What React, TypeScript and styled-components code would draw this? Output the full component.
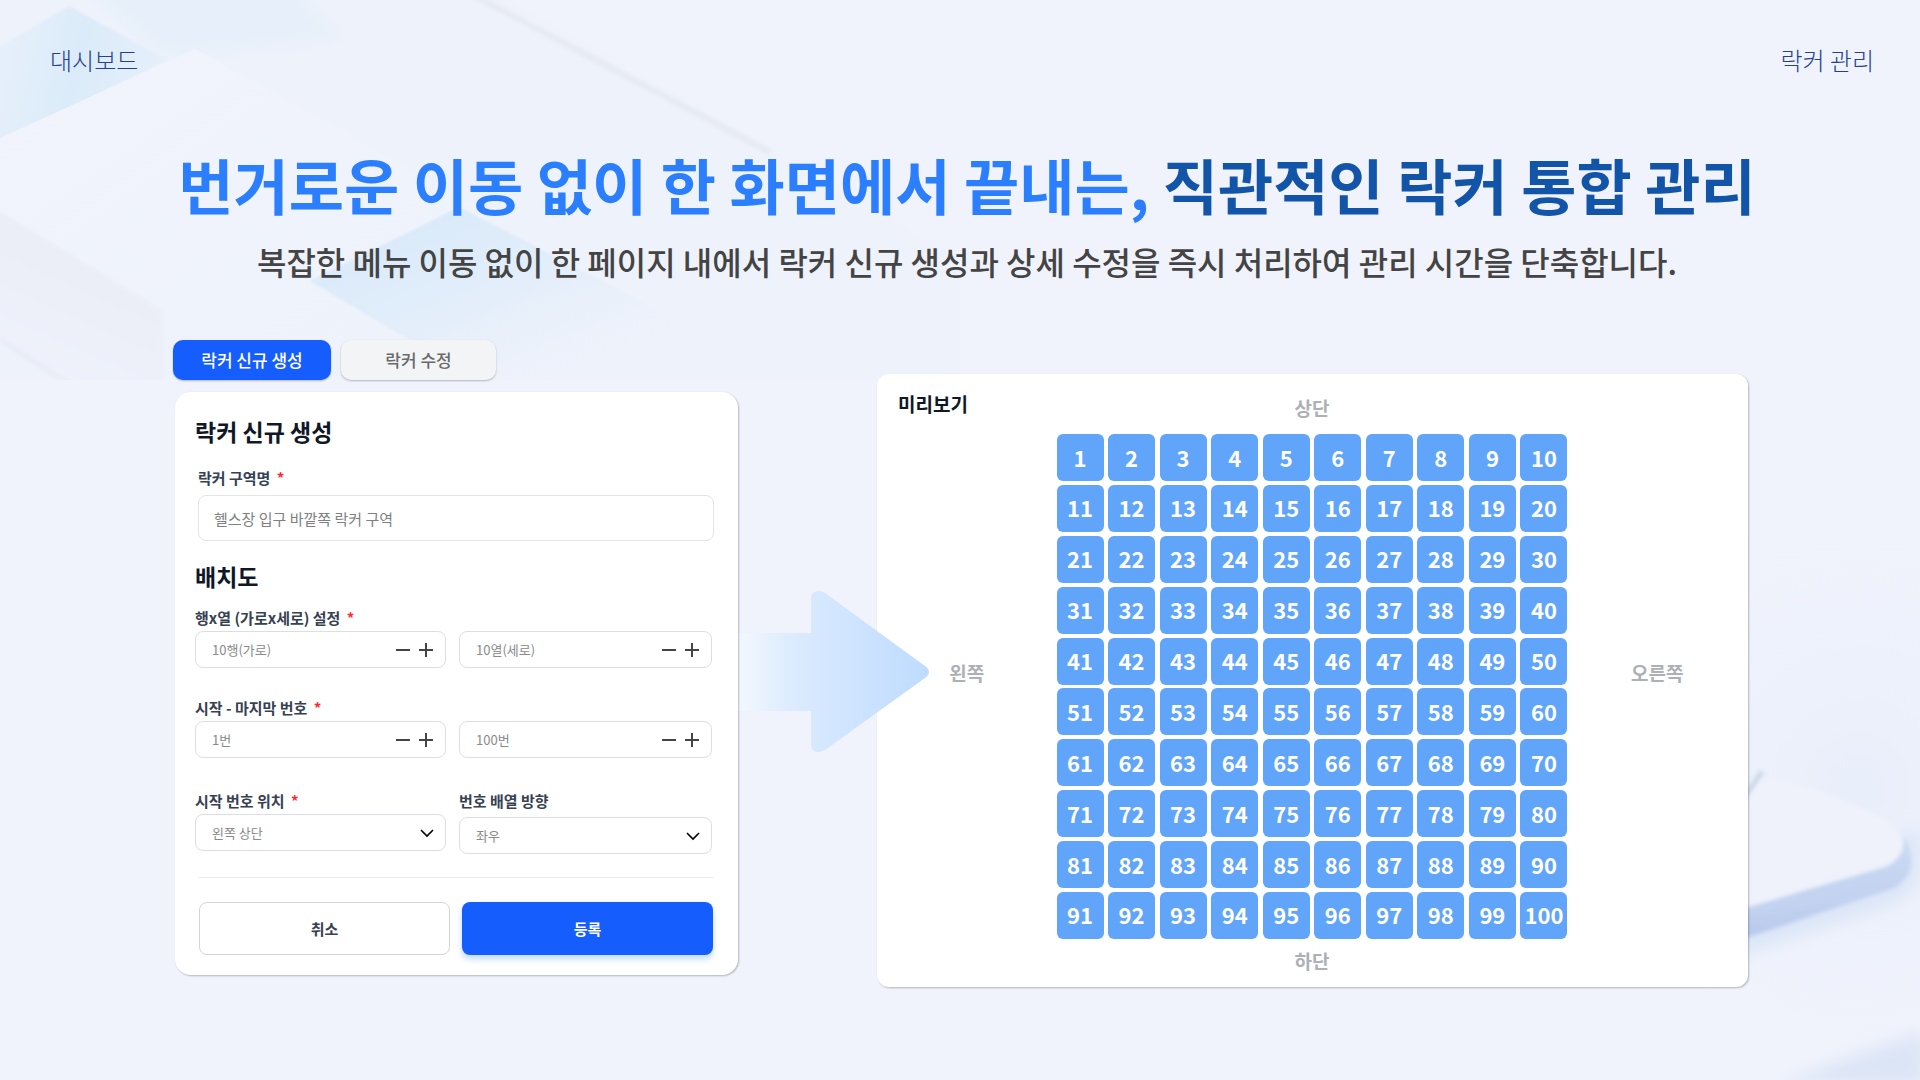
import React from "react";
import styled, { createGlobalStyle, css } from "styled-components";

const GlobalStyle = createGlobalStyle`
  * { box-sizing: border-box; }
  body {
    margin: 0;
    background: #eff3fc;
    font-family: "Noto Sans CJK KR", "Noto Sans", sans-serif;
  }
  button, input, select { font-family: inherit; }
`;

const Page = styled.div`
  position: relative;
  isolation: isolate;
  min-height: 100vh;
  overflow: hidden;
  background: #f0f3fc;
`;

const Backdrop = styled.svg`
  position: absolute;
  inset: 0;
  z-index: -1;
  width: 100%;
  height: 100%;
`;

const TopBar = styled.header`
  display: flex;
  justify-content: space-between;
  padding: 40px 46px 0 50px;
`;

const TopLink = styled.a`
  color: #24418f;
  font-size: 24px;
  font-weight: 300;
  line-height: 40px;
  text-decoration: none;
`;

const Hero = styled.div`
  padding: 60px 24px 0 38px;
  text-align: center;
`;

const Title = styled.h1`
  margin: 0;
  color: #2b7fff;
  font-size: 60px;
  font-weight: 700;
  line-height: 88px;
`;

const TitleStrong = styled.span`
  color: #1254a8;
`;

const Subtitle = styled.p`
  margin: 9px 0 0;
  color: #444444;
  font-size: 32px;
  font-weight: 500;
  line-height: 48px;
`;

const Stage = styled.main`
  display: grid;
  grid-template-columns: 565fr 139fr 871fr;
  align-items: start;
  margin: 55px 172px 0 173px;
`;

const FormColumn = styled.section`
  position: relative;
  z-index: 2;
  display: flex;
  flex-direction: column;
  gap: 12px;
`;

const Tabs = styled.div`
  display: flex;
  gap: 10px;
`;

const Tab = styled.button<{ $active?: boolean }>`
  width: ${(p) => (p.$active ? 158 : 155)}px;
  height: 40px;
  padding: 0;
  border: 0;
  border-radius: 10px;
  background: ${(p) => (p.$active ? "#155dfc" : "#f3f4f6")};
  color: ${(p) => (p.$active ? "#ffffff" : "#6a6a6a")};
  font-size: 17px;
  font-weight: 500;
  line-height: 24px;
  box-shadow: 0 1px 2px rgba(0, 0, 0, 0.25);
`;

const cardStyle = css`
  background: #ffffff;
  box-shadow: 1px 1px 2px rgba(0, 0, 0, 0.25);
`;

const FormCard = styled.form`
  ${cardStyle}
  display: flex;
  flex-direction: column;
  margin-left: 2px;
  padding: 22px 24px 20px 20px;
  border-radius: 16px;
`;

const SectionTitle = styled.h2`
  margin: 0;
  color: #101828;
  font-size: 23px;
  font-weight: 700;
  line-height: 34px;
`;

const Field = styled.div`
  display: flex;
  flex-direction: column;
  gap: 1px;
  min-width: 0;
`;

const NameField = styled(Field)`
  margin: 18px 0;
  padding-left: 3px;
  gap: 5px;
`;

const Label = styled.label`
  color: #364153;
  font-size: 15px;
  font-weight: 700;
  line-height: 24px;
`;

const Required = styled.span`
  margin-left: 3px;
  color: #fb2c36;
`;

const Box = styled.div`
  display: flex;
  align-items: center;
  height: 37px;
  padding: 0 8px 0 16px;
  border: 1px solid #dcdee6;
  border-radius: 8px;
  background: #ffffff;
`;

const NameInput = styled.input`
  width: 100%;
  height: 46px;
  padding: 0 15px;
  border: 1px solid #e2e4ec;
  border-radius: 8px;
  background: #ffffff;
  color: #808080;
  font-size: 15px;
`;

const BoxInput = styled.input`
  flex: 1;
  min-width: 0;
  padding: 0;
  border: 0;
  outline: 0;
  background: transparent;
  color: #8a8a8a;
  font-size: 13px;
`;

const StepButton = styled.button`
  display: flex;
  align-items: center;
  justify-content: center;
  width: 23px;
  height: 24px;
  padding: 0;
  border: 0;
  background: transparent;
`;

const SelectWrap = styled(Box)`
  position: relative;
  padding: 0;
`;

const Select = styled.select`
  width: 100%;
  height: 100%;
  padding: 0 40px 0 16px;
  border: 0;
  border-radius: 8px;
  appearance: none;
  background: transparent;
  color: #8a8a8a;
  font-size: 13px;
`;

const SelectArrow = styled.svg`
  position: absolute;
  right: 11px;
  top: 50%;
  margin-top: -6px;
  pointer-events: none;
`;

const PairRow = styled.div<{ $top?: number }>`
  display: grid;
  grid-template-columns: 251fr 253fr;
  column-gap: 13px;
  align-items: end;
  margin: ${(p) => p.$top ?? 0}px 2px 0 0;
`;

const SelectRow = styled(PairRow)`
  align-items: start;
`;

const LooseField = styled(Field)`
  gap: 4px;
`;

const Actions = styled.div`
  display: grid;
  grid-template-columns: 1fr 1fr;
  gap: 12px;
  margin: 23px 1px 0 4px;
  padding-top: 24px;
  border-top: 1px solid #e8eaee;
`;

const ActionButton = styled.button<{ $primary?: boolean }>`
  height: 53px;
  border: ${(p) => (p.$primary ? "0" : "1px solid #d1d5dc")};
  border-radius: 8px;
  background: ${(p) => (p.$primary ? "#155dfc" : "#ffffff")};
  color: ${(p) => (p.$primary ? "#ffffff" : "#364153")};
  font-size: 15px;
  font-weight: 700;
  box-shadow: ${(p) => (p.$primary ? "0 4px 6px #bedbff" : "none")};
`;

const ArrowColumn = styled.div`
  position: relative;
  z-index: 1;
  align-self: stretch;
`;

const Arrow = styled.svg`
  position: absolute;
  left: 0;
  top: 251px;
`;

const PreviewCard = styled.section`
  ${cardStyle}
  display: grid;
  grid-template-columns: 1fr 511px 1fr;
  margin-top: 34px;
  padding: 16px 1px 12px 0;
  border-radius: 12px;
`;

const PreviewTitle = styled.h2`
  grid-area: 1 / 1;
  margin: 0 0 0 21px;
  color: #101828;
  font-size: 19px;
  font-weight: 700;
  line-height: 28px;
`;

const Side = styled.div<{ $area: string }>`
  grid-area: ${(p) => p.$area};
  place-self: center;
  color: #adb0b6;
  font-size: 19px;
  font-weight: 700;
  line-height: 28px;
`;

const TopSide = styled(Side)`
  margin-top: 4px;
`;

const FlankSide = styled(Side)`
  margin-top: 8px;
`;

const LockerGrid = styled.div`
  grid-area: 2 / 2;
  display: grid;
  grid-template-columns: repeat(10, 47px);
  grid-template-rows: repeat(10, 47px);
  justify-content: space-between;
  align-content: space-between;
  height: 505px;
  margin: 12px 0 8px;
`;

const Locker = styled.button`
  padding: 0 0 2px;
  border: 0;
  border-radius: 6px;
  background: #60a5fa;
  color: #ffffff;
  font-size: 22px;
  font-weight: 700;
  line-height: 1;
`;

const MinusIcon = () => (
  <svg width="14" height="14" viewBox="0 0 14 14" stroke="#444444" strokeWidth="2">
    <path d="M0 7h14" />
  </svg>
);

const PlusIcon = () => (
  <svg width="14" height="14" viewBox="0 0 14 14" stroke="#444444" strokeWidth="2">
    <path d="M0 7h14M7 0v14" />
  </svg>
);

const Star = () => <Required> *</Required>;

function NumberBox({ id, value, label }: { id: string; value: string; label?: string }) {
  return (
    <Box>
      <BoxInput id={id} aria-label={label} defaultValue={value} />
      <StepButton type="button" aria-label="감소"><MinusIcon /></StepButton>
      <StepButton type="button" aria-label="증가"><PlusIcon /></StepButton>
    </Box>
  );
}

function SelectBox({ id, value }: { id: string; value: string }) {
  return (
    <SelectWrap>
      <Select id={id} defaultValue={value}>
        <option>{value}</option>
      </Select>
      <SelectArrow width="14" height="12" viewBox="0 0 14 12" fill="none" stroke="#000000" strokeWidth="1.6">
        <path d="M1 3l6 6 6-6" />
      </SelectArrow>
    </SelectWrap>
  );
}

function BackdropArt() {
  return (
    <Backdrop viewBox="0 0 1920 1080" preserveAspectRatio="xMidYMid slice" aria-hidden="true">
      <defs>
        <linearGradient id="sky" x1="0" y1="0" x2="1" y2="0.2">
          <stop offset="0" stopColor="#e8f1fb" />
          <stop offset="0.55" stopColor="#dcebf9" />
          <stop offset="1" stopColor="#e4effa" />
        </linearGradient>
        <linearGradient id="diamond" x1="0.2" y1="0" x2="0.9" y2="0.7">
          <stop offset="0" stopColor="#d9e9f9" />
          <stop offset="0.5" stopColor="#e3eefa" />
          <stop offset="1" stopColor="#eef2fb" stopOpacity="0" />
        </linearGradient>
        <linearGradient id="slab" x1="0" y1="0" x2="1" y2="1">
          <stop offset="0" stopColor="#f1f4fc" />
          <stop offset="1" stopColor="#eef2fb" />
        </linearGradient>
        <linearGradient id="strip" x1="0.6" y1="0.2" x2="0.3" y2="0.9">
          <stop offset="0" stopColor="#eaedf5" />
          <stop offset="1" stopColor="#eef2fb" />
        </linearGradient>
        <linearGradient id="edge" x1="0" y1="0" x2="0.2" y2="1">
          <stop offset="0" stopColor="#cfdff5" />
          <stop offset="0.7" stopColor="#c2d2f0" />
          <stop offset="1" stopColor="#b4c6ea" />
        </linearGradient>
        <radialGradient id="corner" cx="0.9" cy="0.55" r="0.5">
          <stop offset="0" stopColor="#e8eefa" />
          <stop offset="1" stopColor="#f0f3fc" stopOpacity="0" />
        </radialGradient>
        <filter id="soft1"><feGaussianBlur stdDeviation="1" /></filter>
        <filter id="soft2"><feGaussianBlur stdDeviation="2" /></filter>
        <filter id="soft8"><feGaussianBlur stdDeviation="8" /></filter>
        <clipPath id="topClip"><path d="M0 0h960v380H0z" /></clipPath>
      </defs>
      <g clipPath="url(#topClip)">
        <path d="M-20 -20H470L960 260V400H-20z" fill="#eef2fb" filter="url(#soft8)" />
        <path d="M75 -20H290L345 40L165 60z" fill="#e7f0fa" filter="url(#soft8)" />
        <path d="M-10 52L69 6L167 60L-10 150z" fill="url(#sky)" filter="url(#soft1)" />
        <path d="M0 138L195 49L480 207L300 380H165V310L0 212z" fill="url(#slab)" />
        <path d="M-10 206L161 310L165 390H60L-10 340z" fill="url(#strip)" filter="url(#soft2)" />
        <path d="M459 207L740 352L760 390H494L310 281z" fill="url(#diamond)" filter="url(#soft1)" />
        <path d="M475 -4L770 152" stroke="#e4e8f0" strokeWidth="5" filter="url(#soft2)" />
        <path d="M0 340L70 384" stroke="#e7ebf4" strokeWidth="4" filter="url(#soft2)" />
      </g>
      <path d="M1300 430H1920V1080H1300z" fill="url(#corner)" />
      <path d="M1740 956L1890 905Q1915 895 1920 870V830L1740 900z" fill="#dbe6f7" filter="url(#soft8)" />
      <g filter="url(#soft2)">
        <path d="M1740 806L1762 772" stroke="#cbd7e9" strokeWidth="6" />
        <path d="M1740 908L1888 865Q1904 856 1904 836Q1922 872 1894 888L1740 940z" fill="url(#edge)" />
      </g>
      <path
        d="M1740 808L1764 776Q1830 790 1888 822Q1918 848 1886 866L1740 909z"
        fill="#eff2fb"
        filter="url(#soft2)"
      />
      <path d="M1780 1084Q1850 1056 1924 1032V1084z" fill="#dce5f6" filter="url(#soft8)" />
    </Backdrop>
  );
}

export default function App() {
  return (
    <Page>
      <GlobalStyle />
      <BackdropArt />
      <TopBar>
        <TopLink href="#dashboard">대시보드</TopLink>
        <TopLink href="#lockers">락커 관리</TopLink>
      </TopBar>
      <Hero>
        <Title>
          번거로운 이동 없이 한 화면에서 끝내는, <TitleStrong>직관적인 락커 통합 관리</TitleStrong>
        </Title>
        <Subtitle>
          복잡한 메뉴 이동 없이 한 페이지 내에서 락커 신규 생성과 상세 수정을 즉시 처리하여 관리 시간을 단축합니다.
        </Subtitle>
      </Hero>
      <Stage>
        <FormColumn>
          <Tabs>
            <Tab type="button" $active>락커 신규 생성</Tab>
            <Tab type="button">락커 수정</Tab>
          </Tabs>
          <FormCard onSubmit={(e) => e.preventDefault()}>
            <SectionTitle>락커 신규 생성</SectionTitle>
            <NameField>
              <Label htmlFor="zone">락커 구역명<Star /></Label>
              <NameInput id="zone" defaultValue="헬스장 입구 바깥쪽 락커 구역" />
            </NameField>
            <SectionTitle>배치도</SectionTitle>
            <PairRow $top={13}>
              <Field>
                <Label htmlFor="rows">행x열 (가로x세로) 설정<Star /></Label>
                <NumberBox id="rows" value="10행(가로)" />
              </Field>
              <NumberBox id="cols" label="열" value="10열(세로)" />
            </PairRow>
            <PairRow $top={28}>
              <Field>
                <Label htmlFor="first">시작 - 마지막 번호<Star /></Label>
                <NumberBox id="first" value="1번" />
              </Field>
              <NumberBox id="last" label="마지막 번호" value="100번" />
            </PairRow>
            <SelectRow $top={31}>
              <Field>
                <Label htmlFor="origin">시작 번호 위치<Star /></Label>
                <SelectBox id="origin" value="왼쪽 상단" />
              </Field>
              <LooseField>
                <Label htmlFor="direction">번호 배열 방향</Label>
                <SelectBox id="direction" value="좌우" />
              </LooseField>
            </SelectRow>
            <Actions>
              <ActionButton type="button">취소</ActionButton>
              <ActionButton type="submit" $primary>등록</ActionButton>
            </Actions>
          </FormCard>
        </FormColumn>
        <ArrowColumn>
          <Arrow width="192" height="162" viewBox="0 0 192 162" aria-hidden="true">
            <defs>
              <linearGradient id="arrow" x1="0" y1="0" x2="1" y2="0">
                <stop offset="0" stopColor="#f3f8ff" />
                <stop offset="0.25" stopColor="#deedfe" />
                <stop offset="0.38" stopColor="#d8e9fe" />
                <stop offset="1" stopColor="#bedbff" />
              </linearGradient>
            </defs>
            <path
              d="M0 42H73V8Q73 0 81 0Q84 0 87 2L187 75Q191 78 191 81Q191 84 187 87L87 159Q84 161 80 161Q73 161 73 153V120H0z"
              fill="url(#arrow)"
            />
          </Arrow>
        </ArrowColumn>
        <PreviewCard>
          <PreviewTitle>미리보기</PreviewTitle>
          <TopSide $area="1 / 2">상단</TopSide>
          <FlankSide $area="1 / 1 / 3 / 2">왼쪽</FlankSide>
          <LockerGrid>
            {Array.from({ length: 100 }, (_, i) => (
              <Locker type="button" key={i}>{i + 1}</Locker>
            ))}
          </LockerGrid>
          <FlankSide $area="1 / 3 / 3 / 4">오른쪽</FlankSide>
          <Side $area="3 / 2">하단</Side>
        </PreviewCard>
      </Stage>
    </Page>
  );
}
